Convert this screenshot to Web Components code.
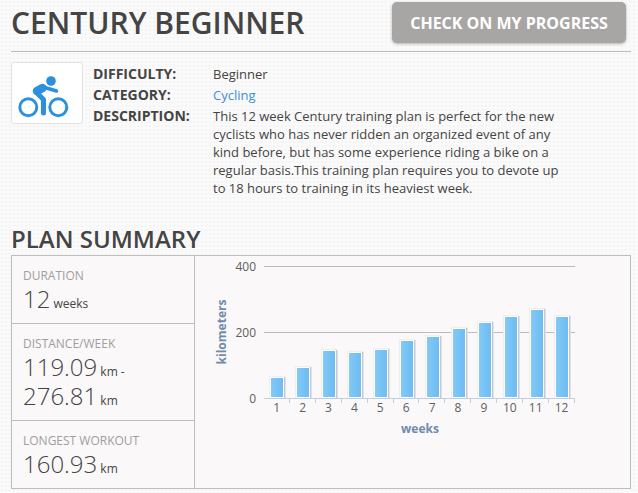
<!DOCTYPE html>
<html>
<head>
<meta charset="utf-8">
<title>Century Beginner</title>
<style>
  html, body { margin: 0; padding: 0; }
  body {
    height: 493px;
    overflow: hidden;
    color: #444;
    font-family: "Open Sans", sans-serif;
    background-color: #fbfafa;
    background-image: radial-gradient(#f5f3f3 1px, transparent 1px);
    background-size: 4px 4px;
  }
</style>
</head>
<body>
<plan-page></plan-page>

<script>
class PlanPage extends HTMLElement {
  constructor() {
    super();
    this.attachShadow({ mode: 'open' });
  }

  connectedCallback() {
    this.shadowRoot.innerHTML = `
      <style>
        :host { display: block; padding: 0 7px 0 11px; }
      </style>
      <plan-header title="CENTURY BEGINNER" action="CHECK ON MY PROGRESS"></plan-header>
      <plan-details></plan-details>
      <plan-summary></plan-summary>
    `;
  }
}

class PlanHeader extends HTMLElement {
  constructor() {
    super();
    this.attachShadow({ mode: 'open' });
  }

  connectedCallback() {
    const title = this.getAttribute('title');
    const action = this.getAttribute('action');
    this.shadowRoot.innerHTML = `
      <style>
        :host {
          display: flex;
          justify-content: space-between;
          align-items: flex-start;
          height: 51px;
          border-bottom: 1px solid #bdbdbd;
        }
        h1 {
          margin: 0;
          font: 600 30px/46px "Open Sans", sans-serif;
          color: #444;
        }
        button {
          margin: 2px 5px 0 0;
          width: 234px;
          height: 41px;
          border: 0;
          border-radius: 5px;
          background: #a8a6a4;
          box-shadow: 0 1px 3px rgba(0, 0, 0, .3);
          color: #fff;
          font: 700 16px "Open Sans", sans-serif;
        }
      </style>
      <h1>${title}</h1>
      <button>${action}</button>
    `;
  }
}

class PlanDetails extends HTMLElement {
  constructor() {
    super();
    this.attachShadow({ mode: 'open' });
  }

  connectedCallback() {
    this.shadowRoot.innerHTML = `
      <style>
        :host {
          display: flex;
          gap: 10px;
          margin-top: 10px;
          height: 163px;
          font-size: 13px;
          line-height: 18px;
        }
        .icon {
          box-sizing: border-box;
          width: 72px;
          height: 62px;
          background: #fff;
          border: 1px solid #e2e2e2;
          border-radius: 3px;
        }
        .icon svg { display: block; }
        dl {
          margin: 3px 0 0;
          display: grid;
          grid-template-columns: 120px 346px;
          align-content: start;
          row-gap: 3px;
        }
        dt { font-weight: 700; font-size: 14px; color: #444; }
        dd { margin: 0; }
        a { color: #3b8fd8; text-decoration: none; }
      </style>
      <div class="icon">
        <svg width="70" height="60" viewBox="0 0 70 60" fill="none">
          <circle cx="39" cy="18" r="4.800" fill="#2b90de"/>
          <circle cx="16.300" cy="44.200" r="8.500" stroke="#2b90de" stroke-width="3"/>
          <circle cx="46.300" cy="44.200" r="8.500" stroke="#2b90de" stroke-width="3"/>
          <path d="M31 24L44.500 28" stroke="#2b90de" stroke-width="3.500" stroke-linecap="round"/>
          <path d="M25 28L30.500 25" stroke="#2b90de" stroke-width="8.500" stroke-linecap="round"/>
          <path d="M24.500 29.500L31.500 36.500V50" stroke="#2b90de" stroke-width="5" stroke-linecap="round" stroke-linejoin="round"/>
        </svg>
      </div>
      <dl>
        <dt>DIFFICULTY:</dt><dd>Beginner</dd>
        <dt>CATEGORY:</dt><dd><a href="#">Cycling</a></dd>
        <dt>DESCRIPTION:</dt>
        <dd>This 12 week Century training plan is perfect for the new cyclists who has never ridden an organized event of any kind before, but has some experience riding a bike on a regular basis.This training plan requires you to devote up to 18 hours to training in its heaviest week.</dd>
      </dl>
    `;
  }
}

class SummaryStat extends HTMLElement {
  constructor() {
    super();
    this.attachShadow({ mode: 'open' });
  }

  connectedCallback() {
    this.shadowRoot.innerHTML = `
      <style>
        :host {
          display: block;
          padding: 11px 11px 10px;
          border-bottom: 1px solid #bdbdbd;
        }
        :host(:last-child) { border-bottom: 0; }
        .label { font-size: 12px; line-height: 17px; color: #a09e9e; }
        .value { font-size: 24px; font-weight: 300; line-height: 29px; color: #444; }
        ::slotted(small) { font-size: 12px; font-weight: 400; line-height: 1; }
      </style>
      <div class="label">${this.getAttribute('label')}</div>
      <div class="value"><slot></slot></div>
    `;
  }
}

class WeeklyChart extends HTMLElement {
  constructor() {
    super();
    this.attachShadow({ mode: 'open' });
  }

  connectedCallback() {
    // bar tops, read off the picture, in svg coordinates (origin 195,256)
    const tops = [122, 112, 95, 97, 94, 85, 81, 73, 67, 61, 54, 61];
    const bottom = 141;
    const bars = tops.map((top, i) => {
      const x = Math.round(76 + i * 25.95);
      const h = bottom - top;
      return `
        <rect x="${x - 2}" y="${top - 2}" width="16" height="${h + 3}" fill="#eee"/>
        <rect x="${x + 13}" y="${top - 1}" width="1" height="${h + 2}" fill="#c8c8c8"/>
        <rect x="${x + 14}" y="${top - 1}" width="1" height="${h + 2}" fill="#e2e2e2"/>
        <rect x="${x - 1}" y="${top - 1}" width="14" height="${h + 2}" fill="#fff"/>
        <rect x="${x}" y="${top}" width="12" height="${h}" fill="url(#bar)"/>
      `;
    }).join('');
    const labels = tops.map((top, i) => `
      <text x="${81.7 + i * 25.9}" y="156" text-anchor="middle" class="tick">${i + 1}</text>
    `).join('');
    const ticks = tops.map((top, i) => `M${Math.round(68 + (i + 1) * 25.9) + .5} 142.500V147`).join('');

    this.shadowRoot.innerHTML = `
      <style>
        :host { display: block; flex: none; width: 435px; }
        svg { display: block; }
        .tick { font: 12px "Open Sans", sans-serif; fill: #606060; }
        .axis { font: 700 12px "Open Sans", sans-serif; fill: #6f8bab; }
      </style>
      <svg width="435" height="231" viewBox="0 0 435 231">
        <defs>
          <linearGradient id="bar">
            <stop offset="0" stop-color="#82c9f6"/>
            <stop offset="1" stop-color="#6dbcf2"/>
          </linearGradient>
        </defs>
        <path d="M69 10.500H380M69 76.500H380" stroke="#bbb"/>
        <text x="61" y="15" text-anchor="end" class="tick">400</text>
        <text x="61" y="81" text-anchor="end" class="tick">200</text>
        <text x="61" y="147" text-anchor="end" class="tick">0</text>
        <text transform="translate(31 76) rotate(-90)" text-anchor="middle" class="axis">kilometers</text>
        <text x="225" y="177" text-anchor="middle" class="axis">weeks</text>
        ${bars}
        <path d="M69 142.500H380${ticks}" stroke="#c0d0e0"/>
        ${labels}
      </svg>
    `;
  }
}

class PlanSummary extends HTMLElement {
  constructor() {
    super();
    this.attachShadow({ mode: 'open' });
  }

  connectedCallback() {
    this.shadowRoot.innerHTML = `
      <style>
        :host { display: block; }
        h2 {
          margin: 0;
          padding-bottom: 3px;
          font: 600 24px/27px "Open Sans", sans-serif;
          color: #444;
        }
        .box {
          display: flex;
          height: 234px;
          box-sizing: border-box;
          border: 1px solid #bdbdbd;
          background: #faf8f9;
        }
        .stats { flex: none; width: 182px; border-right: 1px solid #bdbdbd; }
      </style>
      <h2>PLAN SUMMARY</h2>
      <div class="box">
        <div class="stats">
          <summary-stat label="DURATION">12<small> weeks</small></summary-stat>
          <summary-stat label="DISTANCE/WEEK">119.09<small> km -</small> 276.81<small> km</small></summary-stat>
          <summary-stat label="LONGEST WORKOUT">160.93<small> km</small></summary-stat>
        </div>
        <weekly-chart></weekly-chart>
      </div>
    `;
  }
}

customElements.define('plan-page', PlanPage);
customElements.define('plan-header', PlanHeader);
customElements.define('plan-details', PlanDetails);
customElements.define('summary-stat', SummaryStat);
customElements.define('weekly-chart', WeeklyChart);
customElements.define('plan-summary', PlanSummary);
</script>
</body>
</html>
